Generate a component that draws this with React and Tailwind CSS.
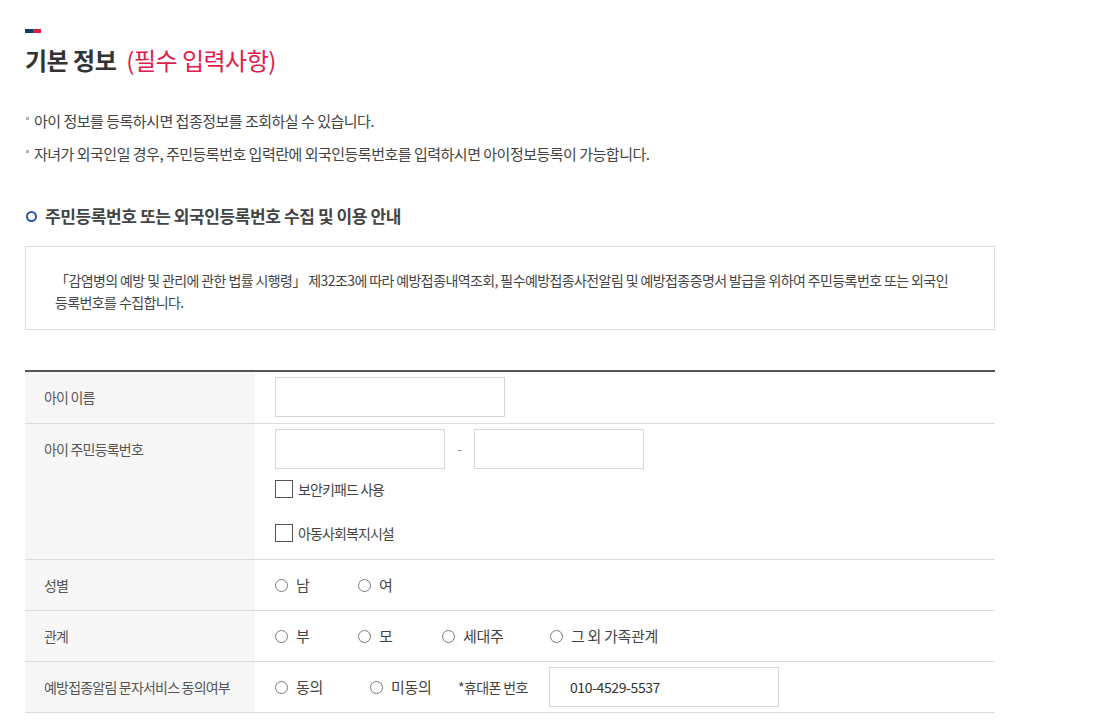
import React from "react";

const FONT = { fontFamily: '"Noto Sans CJK KR", "Noto Sans", sans-serif' };

function Radio({ label, w }) {
  return (
    <div className={`flex items-center ${w}`}>
      <span className="block w-[13px] h-[13px] rounded-full border border-[#7a7a7a] bg-white shrink-0" />
      <span className="ml-[8px] text-[15px] tracking-[-0.3px] text-[#444]">{label}</span>
    </div>
  );
}

function Check({ label }) {
  return (
    <div className="flex items-center h-[18px]">
      <span className="block w-[18px] h-[18px] border border-[#555] bg-white shrink-0" />
      <span className="ml-[5px] leading-[18px] text-[14px] tracking-[-0.9px] text-[#444]">{label}</span>
    </div>
  );
}

function Row({ label, children, top, pb = "pb-[5px]" }) {
  return (
    <div className="grid grid-cols-[230px_1fr] border-b border-[#dcdcdc]">
      <div className={`bg-[#f7f7f7] pl-[19px] pt-[5px] ${pb} flex ${top ? "items-start" : "items-center"}`}>
        <span className="leading-[40px] text-[14px] tracking-[-0.8px] text-[#555]">{label}</span>
      </div>
      <div className={`pl-[20px] pt-[5px] ${pb}`}>{children}</div>
    </div>
  );
}

export default function App() {
  return (
    <div className="bg-white min-h-[726px] w-[1099px]" style={FONT}>
      <div className="pt-[29px] pl-[25px] w-[995px]">
        <div className="flex h-[4px] w-[16px]">
          <div className="w-[8px] h-full bg-[#0f3a6c]" />
          <div className="w-[8px] h-full bg-[#e3203f]" />
        </div>
        <h2 className="mt-[11px] leading-[32px] text-[24px] tracking-[-0.5px]">
          <span className="font-bold text-[#333]">기본 정보</span>
          <span className="ml-[10px] font-normal text-[#e0204a]">(필수 입력사항)</span>
        </h2>

        <ul className="mt-[28px] text-[15px] tracking-[-0.5px] text-[#444]">
          <li className="flex items-center leading-[33px]">
            <span className="block w-[3px] h-[3px] bg-[#b5b5b5] mr-[5px] -mt-[4px] ml-[1px]" />
            아이 정보를 등록하시면 접종정보를 조회하실 수 있습니다.
          </li>
          <li className="flex items-center leading-[33px]">
            <span className="block w-[3px] h-[3px] bg-[#b5b5b5] mr-[5px] -mt-[4px] ml-[1px]" />
            자녀가 외국인일 경우, 주민등록번호 입력란에 외국인등록번호를 입력하시면 아이정보등록이 가능합니다.
          </li>
        </ul>

        <div className="mt-[34px] flex items-center leading-[24px]">
          <span className="block w-[11px] h-[11px] rounded-full border-2 border-[#2f56a8] ml-[1px]" />
          <span className="ml-[8px] text-[17px] font-bold tracking-[-0.4px] text-[#444]">
            주민등록번호 또는 외국인등록번호 수집 및 이용 안내
          </span>
        </div>

        <div className="mt-[18px] border border-[#dddddd] pt-[22px] pb-[16px] pl-[29px] pr-[20px] text-[14px] leading-[22px] tracking-[-0.6px] text-[#444] break-keep">
          「감염병의 예방 및 관리에 관한 법률 시행령」 제32조3에 따라 예방접종내역조회, 필수예방접종사전알림 및 예방접종증명서 발급을 위하여 주민등록번호 또는 외국인 등록번호를 수집합니다.
        </div>

        <div className="mt-[40px] border-t-2 border-[#555]">
          <Row label="아이 이름" pb="pb-[6px]">
            <div className="w-[230px] h-[40px] border border-[#d6d6d6]" />
          </Row>
          <Row label="아이 주민등록번호" top pb="pb-[0px]">
            <div className="flex items-center">
              <div className="w-[170px] h-[40px] border border-[#d6d6d6]" />
              <span className="w-[29px] text-center text-[#999] text-[13px]">-</span>
              <div className="w-[170px] h-[40px] border border-[#d6d6d6]" />
            </div>
            <div className="mt-[11px]">
              <Check label="보안키패드 사용" />
            </div>
            <div className="mt-[26px] mb-[17px]">
              <Check label="아동사회복지시설" />
            </div>
          </Row>
          <Row label="성별">
            <div className="flex items-center h-[40px]">
              <Radio label="남" w="w-[83px]" />
              <Radio label="여" w="w-[83px]" />
            </div>
          </Row>
          <Row label="관계">
            <div className="flex items-center h-[40px]">
              <Radio label="부" w="w-[83px]" />
              <Radio label="모" w="w-[84px]" />
              <Radio label="세대주" w="w-[108px]" />
              <Radio label="그 외 가족관계" w="w-[140px]" />
            </div>
          </Row>
          <Row label="예방접종알림 문자서비스 동의여부">
            <div className="flex items-center h-[40px]">
              <Radio label="동의" w="w-[95px]" />
              <Radio label="미동의" w="w-[88px]" />
              <span className="w-[91px] text-[14px] tracking-[-0.6px] text-[#444]">*휴대폰 번호</span>
              <div className="w-[230px] h-[40px] border border-[#d6d6d6] flex items-center pl-[20px] text-[14px] tracking-[-0.4px] text-[#333]">
                010-4529-5537
              </div>
            </div>
          </Row>
        </div>
      </div>
    </div>
  );
}
